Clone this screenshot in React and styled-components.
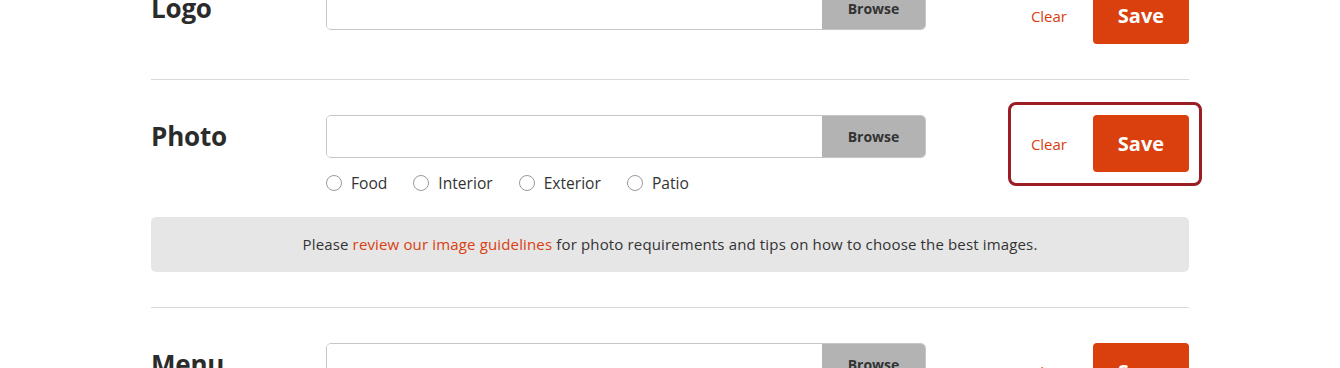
import React from "react";
import styled, { createGlobalStyle } from "styled-components";

const GlobalStyle = createGlobalStyle`
    body {
        margin: 0;
        background: #fff;
        font-family: "Open Sans", "Liberation Sans", sans-serif;
        color: #333;
    }
`;

const sections = [
    { name: "Logo" },
    { name: "Photo", tags: ["Food", "Interior", "Exterior", "Patio"], focused: true, note: true },
    { name: "Menu" },
];

function App() {
    return (
        <>
            <GlobalStyle />
            <Page>
                {sections.map((s) => (
                    <Section key={s.name}>
                        <Row>
                            <Label>{s.name}</Label>
                            <Field>
                                <FileInput>
                                    <PathBox />
                                    <Browse type="button">Browse</Browse>
                                </FileInput>
                                {s.tags && (
                                    <Tags>
                                        {s.tags.map((t) => (
                                            <Tag key={t}>
                                                <Radio />
                                                {t}
                                            </Tag>
                                        ))}
                                    </Tags>
                                )}
                            </Field>
                            <Actions>
                                {s.focused && <Focus />}
                                <Clear type="button">Clear</Clear>
                                <Save type="button">Save</Save>
                            </Actions>
                        </Row>
                        {s.note && (
                            <Note>
                                Please <a href="#">review our image guidelines</a> for photo
                                requirements and tips on how to choose the best images.
                            </Note>
                        )}
                    </Section>
                ))}
            </Page>
        </>
    );
}

export default App;

const Page = styled.div`
    width: 1038px;
    margin: -48px auto 0;
`;
const Section = styled.section`
    padding: 35px 0;
    border-bottom: 1px solid #d9d9d9;
`;
const Row = styled.div`
    display: flex;
    align-items: flex-start;
`;
const Label = styled.h2`
    width: 175px;
    height: 41px;
    margin: 0;
    display: flex;
    align-items: center;
    font-size: 26px;
    font-weight: 700;
    letter-spacing: -0.2px;
    color: #2b2b2b;
`;
const Field = styled.div`
    width: 600px;
`;
const FileInput = styled.div`
    display: flex;
    height: 43px;
    box-sizing: border-box;
    border: 1px solid #c6c6c6;
    border-radius: 5px;
    overflow: hidden;
`;
const PathBox = styled.div`
    flex: 1;
    background: #fff;
`;
const Browse = styled.button`
    width: 103px;
    border: none;
    background: #b3b3b3;
    font-family: inherit;
    font-size: 14px;
    font-weight: 700;
    color: #333;
`;
const Tags = styled.div`
    display: flex;
    align-items: center;
    gap: 26px;
    height: 20px;
    margin-top: 15px;
`;
const Tag = styled.label`
    display: flex;
    align-items: center;
    gap: 9px;
    font-size: 15.6px;
    color: #333;
`;
const Radio = styled.span`
    width: 16px;
    height: 16px;
    box-sizing: border-box;
    border: 1px solid #9a9a9a;
    border-radius: 50%;
    background: #fff;
`;
const Actions = styled.div`
    position: relative;
    margin-left: auto;
    display: flex;
    align-items: center;
    gap: 16px;
`;
const Focus = styled.div`
    position: absolute;
    inset: -13px -13px -14px -13px;
    border: 3px solid #9b1c23;
    border-radius: 8px;
    pointer-events: none;
`;
const Clear = styled.button`
    padding: 0 10px;
    border: none;
    background: none;
    font-family: inherit;
    font-size: 15px;
    color: #d9400f;
`;
const Save = styled.button`
    width: 96px;
    height: 57px;
    border: none;
    border-radius: 4px;
    background: #d9400e;
    font-family: inherit;
    font-size: 20px;
    font-weight: 700;
    color: #fff;
`;
const Note = styled.div`
    margin-top: 24px;
    height: 55px;
    line-height: 55px;
    text-align: center;
    border-radius: 5px;
    background: #e6e6e6;
    font-size: 15px;
    letter-spacing: 0.15px;
    color: #333;
    a {
        color: #d9400f;
        text-decoration: none;
    }
`;
